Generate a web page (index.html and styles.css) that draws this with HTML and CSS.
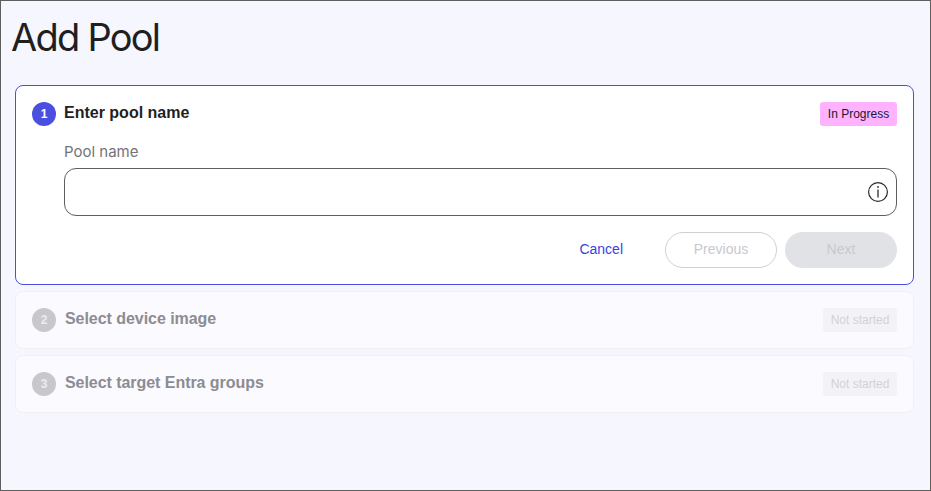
FILE: index.html
```html
<!DOCTYPE html>
<html>
  <head>
    <meta charset="utf-8" />
    <title>Add Pool</title>
    <link rel="stylesheet" href="styles.css">
  </head>
  <body>
    <main class="frame">
      <h1 class="page-title">Add Pool</h1>
      <div class="steps">
        <section class="step step-active">
          <header class="step-head">
            <span class="step-num">1</span>
            <h2 class="step-title">Enter pool name</h2>
            <span class="badge badge-progress">In Progress</span>
          </header>
          <div class="step-body">
            <label class="field-label" for="pool-name">Pool name</label>
            <div class="field">
              <input id="pool-name" class="field-input" type="text" />
              <svg class="info-icon" width="22" height="22" viewBox="0 0 22 22" aria-hidden="true">
                <circle cx="11" cy="11" r="9.4" fill="none" stroke="#2a2a2a" stroke-width="1.2" />
                <rect x="10.2" y="8.5" width="1.6" height="8" fill="#555" />
                <rect x="10.2" y="5" width="1.6" height="2" fill="#555" />
              </svg>
            </div>
            <div class="actions">
              <a class="btn-cancel" href="#">Cancel</a>
              <button class="btn btn-outline" disabled>Previous</button>
              <button class="btn btn-solid" disabled>Next</button>
            </div>
          </div>
        </section>
        <section class="step step-idle">
          <header class="step-head">
            <span class="step-num">2</span>
            <h2 class="step-title">Select device image</h2>
            <span class="badge badge-idle">Not started</span>
          </header>
        </section>
        <section class="step step-idle">
          <header class="step-head">
            <span class="step-num">3</span>
            <h2 class="step-title">Select target Entra groups</h2>
            <span class="badge badge-idle">Not started</span>
          </header>
        </section>
      </div>
    </main>
  </body>
</html>
```

FILE: styles.css
```css
html, body {
    margin: 0;
    height: 100%;
    overflow: hidden;
    font-family: "Liberation Sans", Arial, sans-serif;
}
.frame {
    box-sizing: border-box;
    height: 491px;
    border: 1px solid #5f5f5f;
    background: #f6f7fe;
    padding: 0 16px 0 14px;
}
.page-title {
    margin: 0 0 0 -4px;
    padding-top: 13px;
    height: 84px;
    box-sizing: border-box;
    font-family: Inter, sans-serif;
    font-size: 38px;
    line-height: 46px;
    font-weight: 400;
    letter-spacing: -1.75px;
    color: #1f1f1f;
}
.steps {
    display: flex;
    flex-direction: column;
    gap: 6px;
}
.step {
    box-sizing: border-box;
    border-radius: 8px;
    padding: 16px 16px 15px;
}
.step-active {
    height: 200px;
    background: #fff;
    border: 1px solid #4a4fe0;
}
.step-idle {
    height: 58px;
    background: #fbfaff;
    border: 1px solid #f0f0f5;
}
.step-head {
    display: flex;
    align-items: center;
    height: 24px;
}
.step-num {
    width: 24px;
    height: 24px;
    border-radius: 50%;
    background: #4a4fe0;
    color: #fff;
    font-size: 12px;
    font-weight: bold;
    line-height: 24px;
    text-align: center;
}
.step-title {
    flex: 1;
    margin: -2px 0 0 8px;
    font-size: 16px;
    font-weight: bold;
    color: #1f1f1f;
}
.badge {
    box-sizing: border-box;
    width: 77px;
    height: 24px;
    border-radius: 3px;
    font-size: 12px;
    line-height: 24px;
    text-align: center;
}
.badge-progress {
    background: #ffb3ff;
    color: #1a1a2e;
}
.step-idle .step-num {
    background: #c8c8cc;
    color: #ececf0;
}
.step-idle .step-title {
    margin-left: 9px;
    letter-spacing: -0.05px;
    color: #8c8c92;
}
.badge-idle {
    width: 74px;
    background: #f3f3f7;
    color: #d2d2d6;
}
.step-body {
    padding: 16px 0 0 32px;
}
.field-label {
    display: block;
    font-family: Inter, sans-serif;
    font-size: 15px;
    line-height: 20px;
    color: #74747a;
}
.field {
    display: flex;
    align-items: center;
    box-sizing: border-box;
    height: 48px;
    margin-top: 6px;
    padding-right: 7px;
    border: 1px solid #5f5f5f;
    border-radius: 12px;
}
.field-input {
    flex: 1;
    min-width: 0;
    border: 0;
    outline: 0;
    background: none;
}
.actions {
    display: flex;
    align-items: center;
    justify-content: flex-end;
    gap: 8px;
    margin-top: 16px;
}
.btn-cancel {
    margin-right: 34px;
    margin-top: -2px;
    font-size: 14px;
    color: #3a3fe0;
    text-decoration: none;
}
.btn {
    box-sizing: border-box;
    width: 112px;
    height: 36px;
    padding: 0 0 3px;
    border-radius: 18px;
    font-family: inherit;
    font-size: 14px;
    color: #c8c8d0;
}
.btn-outline {
    background: #fff;
    border: 1px solid #cfcfd6;
}
.btn-solid {
    background: #e1e2e6;
    border: 0;
}
```
